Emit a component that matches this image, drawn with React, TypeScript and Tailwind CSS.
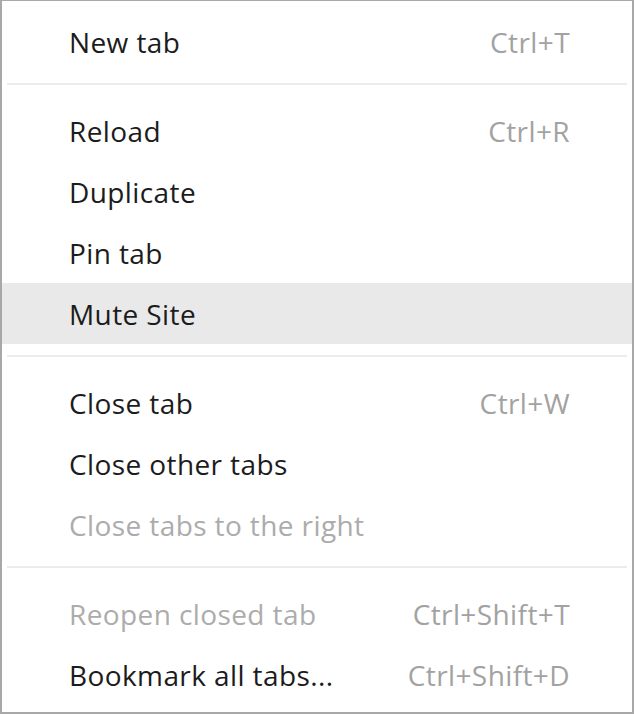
import React from 'react';

type Item = { label: string; shortcut?: string; disabled?: boolean; active?: boolean } | 'sep';

const items: Item[] = [
  { label: 'New tab', shortcut: 'Ctrl+T' },
  'sep',
  { label: 'Reload', shortcut: 'Ctrl+R' },
  { label: 'Duplicate' },
  { label: 'Pin tab' },
  { label: 'Mute Site', active: true },
  'sep',
  { label: 'Close tab', shortcut: 'Ctrl+W' },
  { label: 'Close other tabs' },
  { label: 'Close tabs to the right', disabled: true },
  'sep',
  { label: 'Reopen closed tab', shortcut: 'Ctrl+Shift+T', disabled: true },
  { label: 'Bookmark all tabs...', shortcut: 'Ctrl+Shift+D' },
];

export default function App() {
  return (
    <div
      className="w-[634px] h-[714px] bg-white border-x-2 border-b-2 border-t border-[#a8a8a8] pt-[10px] flex flex-col"
      style={{ fontFamily: '"Open Sans", "Noto Sans", sans-serif' }}
    >
      {items.map((item, i) =>
        item === 'sep' ? (
          <div key={i} className="h-[28px] shrink-0 pt-[11px] px-[5px]">
            <div className="h-[2px] w-full bg-[#ebebeb]" />
          </div>
        ) : (
          <div
            key={i}
            className={`h-[61px] shrink-0 flex items-center justify-between pl-[67px] pr-[62px] text-[28px] tracking-[0.4px] ${
              item.active ? 'bg-[#e9e9e9]' : ''
            }`}
          >
            <span className={item.disabled ? 'text-[#acacac]' : 'text-[#1c1c1c]'}>{item.label}</span>
            {item.shortcut && <span className="text-[#a2a2a2]">{item.shortcut}</span>}
          </div>
        )
      )}
    </div>
  );
}
